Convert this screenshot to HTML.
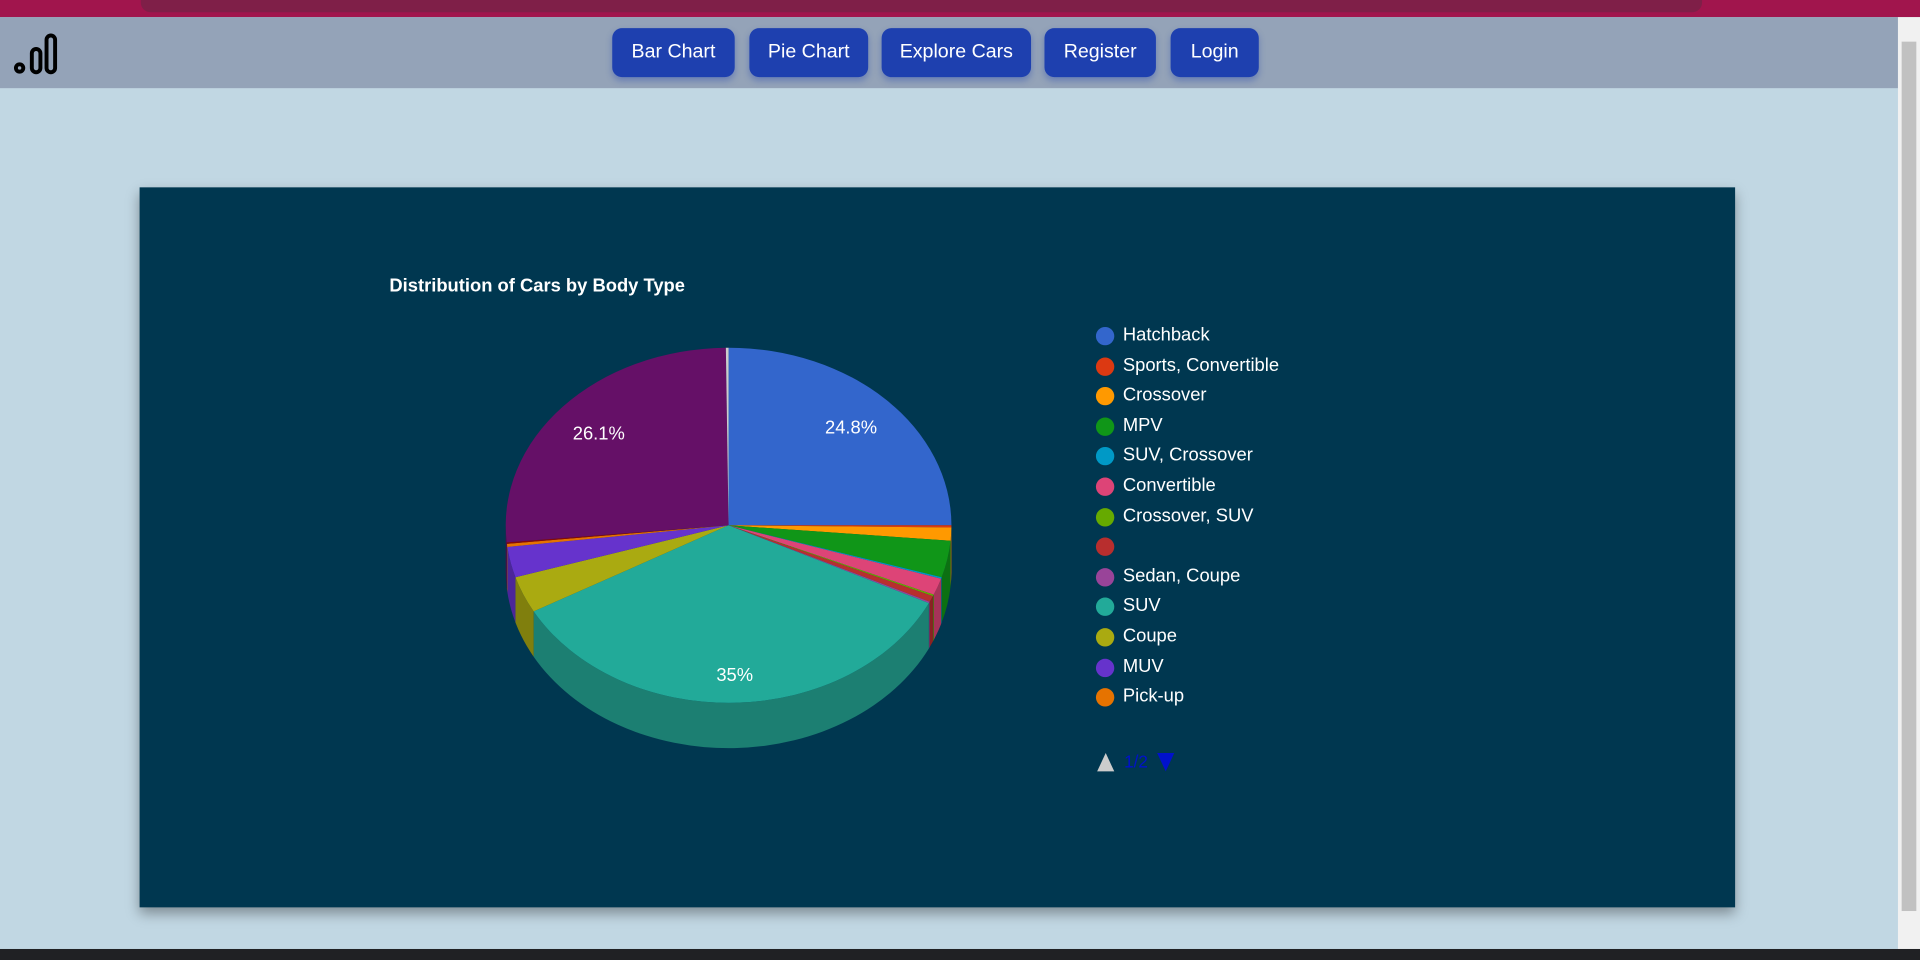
<!DOCTYPE html>
<html><head><meta charset="utf-8">
<style>
html,body{margin:0;padding:0;width:1920px;height:960px;overflow:hidden;background:#c1d7e3;}
#w{position:absolute;left:0;top:0;width:1568px;height:784px;transform:scale(1.22449);transform-origin:0 0;font-family:"Liberation Sans",Arial,sans-serif;background:#c1d7e3;}
#chrome{position:absolute;left:0;top:0;width:1568px;height:14px;background:#a1154d;}
#chrome .u{position:absolute;left:115px;top:0;width:1275px;height:10px;background:#7f1f48;border-radius:0 0 8px 8px;}
#nav{position:absolute;left:0;top:14px;width:1550px;height:58px;background:#94a3b8;}
.b{position:absolute;top:9px;height:40px;background:#1e40af;color:#fff;border-radius:8px;font-size:16px;line-height:40px;text-align:center;box-shadow:0 3px 5px rgba(30,64,175,.35);font-family:"Liberation Sans",sans-serif;}
#sb{position:absolute;left:1550px;top:14px;width:18px;height:761px;background:#f1f1f1;}
#sb .t{position:absolute;left:3px;top:20px;width:12px;height:710px;background:#c1c1c1;}
#bot{position:absolute;left:0;top:775px;width:1568px;height:9px;background:#202124;}
#card{position:absolute;left:114px;top:153px;width:1303px;height:588px;background:#003750;box-shadow:0 5px 10px rgba(0,0,0,.35);}
.lg{position:absolute;left:895px;font-size:15px;color:#fff;}
.lg i{position:absolute;left:0;top:2px;width:15px;height:15px;border-radius:50%;}
.lg span{position:absolute;left:22px;top:0;white-space:nowrap;}
</style></head><body>
<div id="w">
<div id="chrome"><div class="u"></div></div>
<div id="nav">
<svg style="position:absolute;left:10px;top:12px" width="40" height="36" viewBox="0 0 40 36"><g fill="none" stroke="#000" stroke-width="3.2"><circle cx="6" cy="29.5" r="3"/><rect x="16" y="14" width="7" height="19" rx="3.5"/><rect x="28" y="3" width="7" height="30" rx="3.5"/></g></svg>
<div class="b" style="left:500px;width:100px">Bar Chart</div>
<div class="b" style="left:612px;width:97px">Pie Chart</div>
<div class="b" style="left:720px;width:122px">Explore Cars</div>
<div class="b" style="left:853px;width:91px">Register</div>
<div class="b" style="left:956px;width:72px">Login</div>
</div>
<div id="sb"><div class="t"></div></div>
<div id="card"></div>
<svg id="pie" style="position:absolute;left:0;top:0" width="1568" height="784"></svg>
<div style="position:absolute;left:318px;top:225px;color:#fff;font-weight:bold;font-size:15px">Distribution of Cars by Body Type</div>
<div id="leg"></div>
<svg style="position:absolute;left:894px;top:612px" width="70" height="20"><polygon points="2,18 16,18 9,3" fill="#ccc"/><text x="24" y="15" fill="#0011cc" font-size="14" font-family="Liberation Sans">1/2</text><polygon points="51,3 65,3 58,18" fill="#0011cc"/></svg>
<div id="bot"></div>
</div>
<script>
var cx=595,cy=429,rx=182,ry=145,d=37;
var sl=[[0,90,'#3366cc','#264c99'],[90,90.7,'#dc3912','#a52b0e'],[90.7,95,'#ff9900','#bf7300'],[95,107,'#109618','#0c7012'],[107,107.5,'#0099c6','#007394'],[107.5,113,'#dd4477','#a63359'],[113,113.5,'#66aa00','#4c7f00'],[113.5,115.5,'#b82e2e','#8a2222'],[115.5,116,'#994499','#733373'],[116,241,'#22aa99','#1c7f72'],[241,253,'#aaaa11','#807f0d'],[253,263,'#6633cc','#4c2699'],[263,264,'#e67300','#ad5600'],[264,264.5,'#8b0707','#680505'],[264.5,359.3,'#651067','#4c0c4d'],[359.3,360,'#cccccc','#999']];
function P(a,o){a=a*Math.PI/180;return [(cx+rx*Math.sin(a)).toFixed(2),(cy-ry*Math.cos(a)+(o||0)).toFixed(2)];}
var s='';
sl.forEach(function(x){var a1=Math.max(x[0],90),a2=Math.min(x[1],270);if(a2<=a1)return;
var p1=P(a1),p2=P(a2),q2=P(a2,d),q1=P(a1,d);
s+='<path d="M'+p1+' A'+rx+' '+ry+' 0 0 1 '+p2+' L'+q2+' A'+rx+' '+ry+' 0 0 0 '+q1+' Z" fill="'+x[3]+'"/>';});
sl.forEach(function(x){var p1=P(x[0]),p2=P(x[1]);var lg=(x[1]-x[0])>180?1:0;
s+='<path d="M'+cx+' '+cy+' L'+p1+' A'+rx+' '+ry+' 0 '+lg+' 1 '+p2+' Z" fill="'+x[2]+'"/>';});
s+='<g fill="#fff" font-size="15" font-family="Liberation Sans" text-anchor="middle"><text x="695" y="354">24.8%</text><text x="489" y="359">26.1%</text><text x="600" y="556">35%</text></g>';
document.getElementById('pie').innerHTML=s;
var L=[['Hatchback','#3366cc'],['Sports, Convertible','#dc3912'],['Crossover','#ff9900'],['MPV','#109618'],['SUV, Crossover','#0099c6'],['Convertible','#dd4477'],['Crossover, SUV','#66aa00'],['','#b82e2e'],['Sedan, Coupe','#994499'],['SUV','#22aa99'],['Coupe','#aaaa11'],['MUV','#6633cc'],['Pick-up','#e67300']];
var h='';L.forEach(function(x,i){h+='<div class="lg" style="top:'+(265+i*24.6)+'px"><i style="background:'+x[1]+'"></i><span>'+x[0]+'</span></div>';});
document.getElementById('leg').innerHTML=h;
</script>
</body></html>
